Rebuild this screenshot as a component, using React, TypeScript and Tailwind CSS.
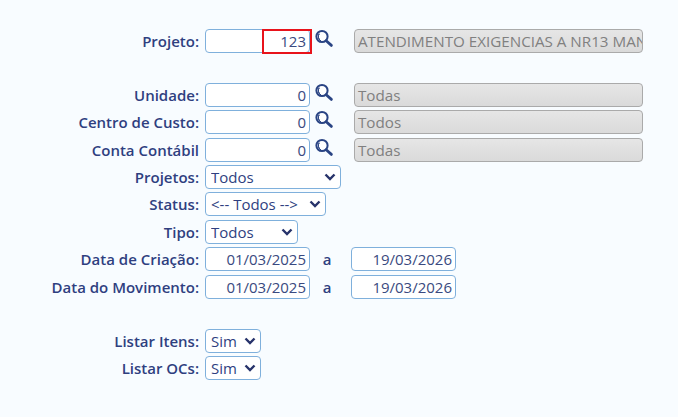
// App.tsx
const labelClass =
  "w-[205px] shrink-0 pr-[6px] text-right text-[15px] font-semibold text-[#2f3f7f] whitespace-nowrap";
const inputClass =
  "h-[24px] rounded-[4px] border border-[#7fb0dc] bg-white px-[3px] text-right text-[15px] text-[#3a4a80]";
const selectClass =
  "h-[24px] w-full appearance-none rounded-[4px] border border-[#7fb0dc] bg-white pl-[5px] text-[15px] text-[#2f3f7f]";
const grayClass =
  "ml-[20px] flex h-[24px] w-[289px] items-center overflow-hidden rounded-[4px] border border-[#aaaaaa] bg-gradient-to-b from-[#e6e6e6] to-[#dadada] pl-[3px] text-[15.2px] whitespace-nowrap text-[#808080]";

function SearchIcon() {
  return (
    <svg width="20" height="20" viewBox="0 0 20 20" className="ml-[4px] -mt-[4px] shrink-0">
      <circle cx="8" cy="7.5" r="5.6" fill="#fff" stroke="#2a4484" strokeWidth="2" />
      <path d="M5.2 4.8a4.8 4.8 0 0 0 1.6 7 5 5 0 0 1-1.6-7z" fill="#2a4484" stroke="#2a4484" strokeWidth="1" />
      <path d="M12.2 11.8l5.2 4.6" stroke="#2a4484" strokeWidth="2.8" strokeLinecap="round" />
    </svg>
  );
}

function Row({ label, className = "", children }: { label: string; className?: string; children: React.ReactNode }) {
  return (
    <div className={`flex h-[24px] items-center ${className}`}>
      <span className={labelClass}>{label}</span>
      {children}
    </div>
  );
}

function LookupRow({ label, value, text, className }: { label: string; value: string; text: string; className?: string }) {
  return (
    <Row label={label} className={className}>
      <input readOnly value={value} className={`${inputClass} w-[105px]`} />
      <SearchIcon />
      <div className={grayClass}>{text}</div>
    </Row>
  );
}

function DateRow({ label, from, to, className }: { label: string; from: string; to: string; className?: string }) {
  return (
    <Row label={label} className={className}>
      <input readOnly value={from} className={`${inputClass} w-[105px]`} />
      <span className="w-[41px] pr-[7px] text-center text-[15px] font-semibold text-[#2f3f7f]">a</span>
      <input readOnly value={to} className={`${inputClass} w-[105px]`} />
    </Row>
  );
}

function SelectBox({ value, width }: { value: string; width: string }) {
  return (
    <div className={`relative ${width}`}>
      <select className={selectClass}>
        <option>{value}</option>
      </select>
      <svg
        width="12"
        height="8"
        viewBox="0 0 12 8"
        className="pointer-events-none absolute top-[8px] right-[5px]"
      >
        <path d="M1.5 1.5L6 6l4.5-4.5" fill="none" stroke="#27336b" strokeWidth="2.4" />
      </svg>
    </div>
  );
}

export default function App() {
  return (
    <div
      className="h-[417px] w-[678px] overflow-hidden bg-[#f8fcff] pt-[29px]"
      style={{ fontFamily: '"Open Sans", sans-serif' }}
    >
      <Row label="Projeto:">
        <div className="relative">
          <input readOnly value="123" className={`${inputClass} w-[105px]`} />
          <div className="absolute top-0 left-[57px] h-[25px] w-[50px] border-2 border-[#e8131b]" />
        </div>
        <SearchIcon />
        <div className={grayClass}>ATENDIMENTO EXIGENCIAS A NR13 MANUTENCAO</div>
      </Row>

      <LookupRow label="Unidade:" value="0" text="Todas" className="mt-[30px]" />
      <LookupRow label="Centro de Custo:" value="0" text="Todos" className="mt-[3px]" />
      <LookupRow label="Conta Contábil" value="0" text="Todas" className="mt-[4px]" />

      <Row label="Projetos:" className="mt-[3px]">
        <SelectBox value="Todos" width="w-[136px]" />
      </Row>
      <Row label="Status:" className="mt-[3px]">
        <SelectBox value="<-- Todos -->" width="w-[121px]" />
      </Row>
      <Row label="Tipo:" className="mt-[4px]">
        <SelectBox value="Todos" width="w-[93px]" />
      </Row>

      <DateRow label="Data de Criação:" from="01/03/2025" to="19/03/2026" className="mt-[3px]" />
      <DateRow label="Data do Movimento:" from="01/03/2025" to="19/03/2026" className="mt-[4px]" />

      <Row label="Listar Itens:" className="mt-[30px]">
        <SelectBox value="Sim" width="w-[56px]" />
      </Row>
      <Row label="Listar OCs:" className="mt-[3px]">
        <SelectBox value="Sim" width="w-[56px]" />
      </Row>
    </div>
  );
}
